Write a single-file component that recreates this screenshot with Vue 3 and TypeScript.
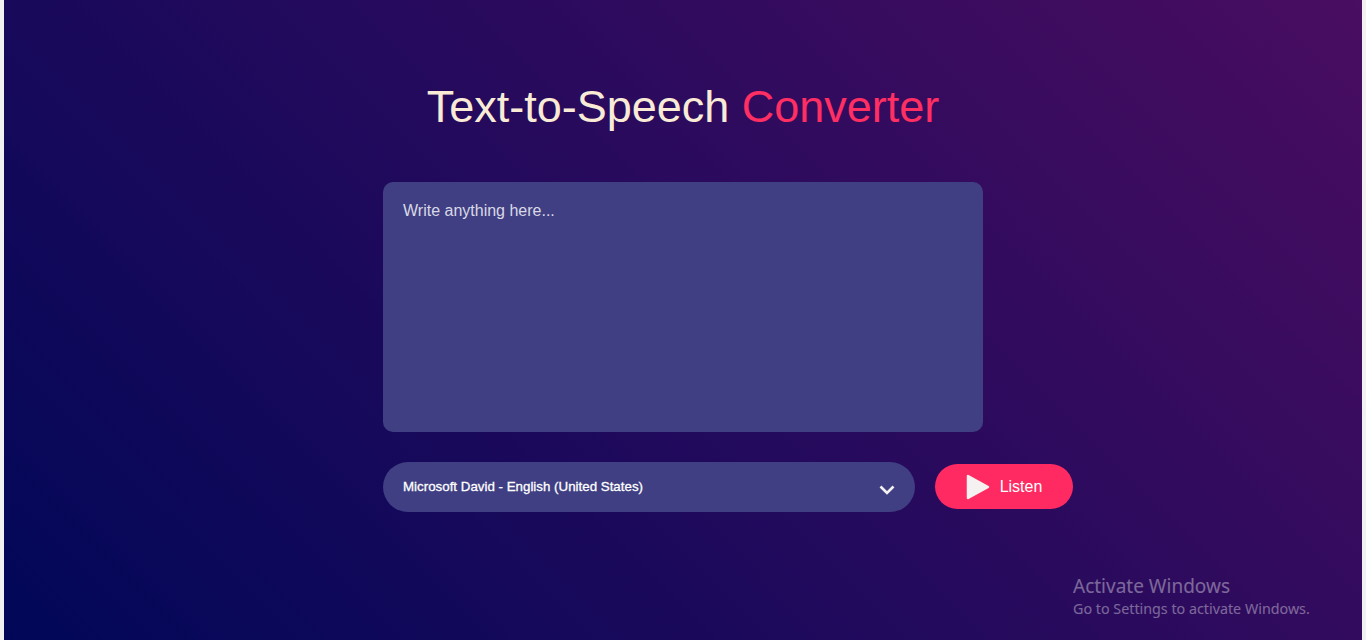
<script setup lang="ts">
const voice = 'Microsoft David - English (United States)'
</script>

<template>
  <div class="frame">
    <main class="page">
      <h1 class="title">Text-to-Speech <span class="accent">Converter</span></h1>
      <div class="panel">
        <textarea class="input" placeholder="Write anything here..."></textarea>
        <div class="controls">
          <div class="select-box">
            <span class="voice">{{ voice }}</span>
            <svg class="chevron" width="16" height="10" viewBox="0 0 16 10" aria-hidden="true">
              <path d="M1.5 1.5 8 8l6.5-6.5" fill="none" stroke="#f4f1f0" stroke-width="2.6" />
            </svg>
          </div>
          <button class="listen" type="button">
            <svg class="play" width="24" height="26" viewBox="0 0 24 26" aria-hidden="true">
              <path d="M2 2 22 13 2 24Z" fill="#f4f1f0" stroke="#f4f1f0" stroke-width="2.5" stroke-linejoin="round" />
            </svg>
            <span>Listen</span>
          </button>
        </div>
      </div>
      <aside class="activate">
        <div class="activate-head">Activate Windows</div>
        <div class="activate-sub">Go to Settings to activate Windows.</div>
      </aside>
    </main>
  </div>
</template>

<style>
html, body { margin: 0; background: #f1f1f1; }
</style>

<style scoped>
.frame {
  height: 640px;
  padding: 0 4px;
  box-sizing: border-box;
  overflow: hidden;
}
.page {
  position: relative;
  height: 100%;
  padding-top: 81px;
  box-sizing: border-box;
  display: flex;
  flex-direction: column;
  align-items: center;
  background: linear-gradient(45deg, #010758, #490d61);
  font-family: "Liberation Sans", Arial, sans-serif;
}
.title {
  margin: 0;
  font-size: 45px;
  line-height: 52px;
  font-weight: 400;
  color: #faebd7;
}
.accent { color: #ff2e63; }
.panel {
  width: 600px;
  margin-top: 49px;
}
.input {
  display: block;
  width: 100%;
  height: 250px;
  padding: 20px;
  box-sizing: border-box;
  border: 0;
  border-radius: 10px;
  outline: 0;
  resize: none;
  background: #403f83;
  color: #fff;
  font-family: inherit;
  font-size: 16px;
}
.input::placeholder { color: #d9d9e6; opacity: 1; }
.controls {
  display: flex;
  align-items: flex-start;
  gap: 20px;
  width: 690px;
  margin-top: 30px;
}
.select-box {
  flex: 1;
  height: 50px;
  padding: 0 20px 2px;
  box-sizing: border-box;
  display: flex;
  align-items: center;
  justify-content: space-between;
  border-radius: 25px;
  background: #403f83;
  color: #fff;
  font-size: 13.33px;
}
.voice { -webkit-text-stroke: 0.3px #fff; }
.chevron { margin-top: 8px; }
.listen {
  width: 138px;
  height: 45px;
  margin-top: 2px;
  padding: 0;
  display: flex;
  align-items: center;
  justify-content: center;
  gap: 10px;
  border: 0;
  border-radius: 23px;
  background: #ff2a62;
  color: #fff;
  font-family: inherit;
  font-size: 16px;
}
.activate {
  position: absolute;
  left: 1069px;
  top: 574px;
  color: #fff;
  opacity: 0.38;
  font-family: "Noto Sans", sans-serif;
}
.activate-head { font-size: 19px; line-height: 25px; }
.activate-sub { font-size: 14.3px; line-height: 20px; }
</style>
